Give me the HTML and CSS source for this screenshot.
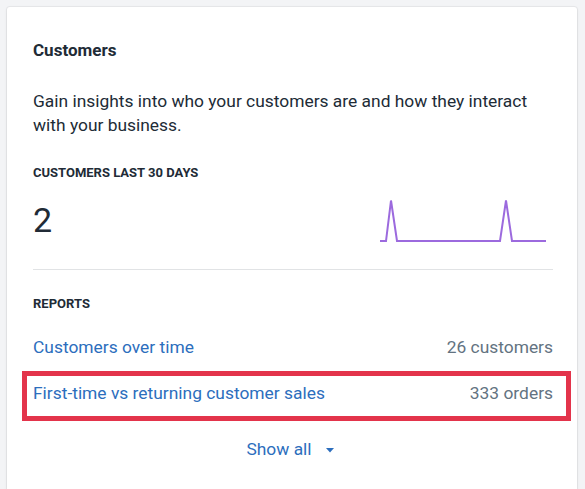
FILE: index.html
```html
<!DOCTYPE html>
<html lang="en">
<head>
<meta charset="utf-8">
<title>Customers</title>
<link rel="stylesheet" href="styles.css">
</head>
<body>
<section class="card">
  <h2 class="card-title">Customers</h2>
  <p class="card-desc">Gain insights into who your customers are and how they interact with your business.</p>
  <h3 class="subheading">Customers last 30 days</h3>
  <div class="metric">
    <span class="metric-value">2</span>
    <svg class="sparkline" width="173" height="45" viewBox="0 0 173 45" aria-hidden="true">
      <polyline points="0,42 6,42 11,1.5 17,42 120,42 126,1.5 132,42 166,42" fill="none" stroke="#9c6ade" stroke-width="2" stroke-linejoin="miter"/>
    </svg>
  </div>
  <div class="divider"></div>
  <h3 class="subheading reports">Reports</h3>
  <ul class="report-list">
    <li class="report-row"><a class="report-link" href="#">Customers over time</a><span class="report-count">26 customers</span></li>
    <li class="report-row highlighted"><a class="report-link" href="#">First-time vs returning customer sales</a><span class="report-count">333 orders</span></li>
  </ul>
  <div class="show-all-wrap">
    <button class="show-all" type="button">Show all <span class="caret-box"><svg width="20" height="20" viewBox="0 0 20 20" aria-hidden="true"><path d="M6 9h8l-4 4.5z" fill="#2c6ebd"/></svg></span></button>
  </div>
</section>
</body>
</html>
```
FILE: styles.css
```css
* { box-sizing: border-box; }
html, body { margin: 0; padding: 0; }
body {
  background: #f3f4f6;
  font-family: Roboto, "Liberation Sans", Arial, sans-serif;
  color: #212b36;
  height: 489px;
  overflow: hidden;
}
.card {
  margin: 7px 0 0 7px;
  width: 570px;
  height: 482px;
  background: #fff;
  border-radius: 3px 3px 0 0;
  box-shadow: 0 0 0 1px rgba(63, 63, 68, 0.06), 0 1px 3px rgba(63, 63, 68, 0.12);
  padding: 31px 24px 0 26px;
}
.card-title {
  margin: 0;
  font-size: 17px;
  line-height: 24px;
  font-weight: 700;
}
.card-desc {
  margin: 27px 0 0;
  font-size: 17.4px;
  line-height: 24px;
  font-weight: 400;
}
.subheading {
  margin: 28px 0 0;
  font-size: 13px;
  line-height: 16px;
  font-weight: 700;
  text-transform: uppercase;
}
.metric {
  margin-top: 18px;
  display: flex;
  justify-content: space-between;
  align-items: flex-start;
  height: 45px;
}
.metric-value {
  font-size: 34px;
  line-height: 40px;
  font-weight: 400;
  margin-top: 1px;
}
.sparkline { display: block; }
.divider {
  margin-top: 25px;
  border-top: 1px solid #e1e3e5;
}
.subheading.reports { margin-top: 26px; }
.report-list {
  list-style: none;
  margin: 23px 0 0;
  padding: 0;
}
.report-row {
  display: flex;
  justify-content: space-between;
  font-size: 17.4px;
  line-height: 24px;
}
.report-row.highlighted {
  margin: 12px -18px 0 -11px;
  border: 5px solid #e3344b;
  padding: 5px 13px 11px 6px;
}
.report-link {
  color: #2c6ebd;
  text-decoration: none;
}
.report-count { color: #637381; }
.show-all-wrap {
  margin-top: 16px;
  display: flex;
  justify-content: center;
}
.show-all {
  display: inline-flex;
  align-items: center;
  gap: 8px;
  border: 0;
  background: none;
  padding: 0;
  font: inherit;
  font-size: 17.4px;
  line-height: 24px;
  color: #2c6ebd;
  cursor: pointer;
}
.caret-box { display: inline-flex; width: 20px; height: 20px; }
```
